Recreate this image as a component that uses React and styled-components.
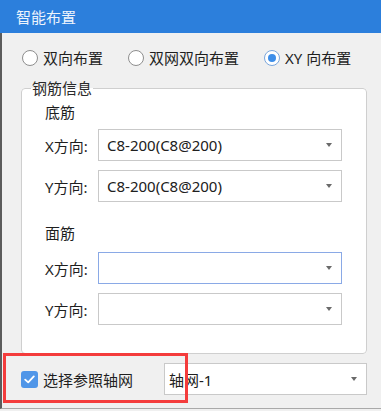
import React from "react";
import styled, { createGlobalStyle } from "styled-components";

const GlobalStyle = createGlobalStyle`
  html, body { margin: 0; padding: 0; background: #f0f0f0; }
  body {
    font-family: "Noto Sans", "Noto Sans CJK SC", sans-serif;
    font-size: 15px;
    color: #1f1f1f;
  }
  * { box-sizing: border-box; }
`;

const Window = styled.div`
  width: 381px;
  height: 411px;
  display: flex;
  flex-direction: column;
  overflow: hidden;
  padding-bottom: 2px;
  background: #f0f0f0;
`;

const TitleBar = styled.div`
  height: 33px;
  flex: none;
  background: #2c7fdc;
  color: #eef4fc;
  display: flex;
  align-items: center;
  padding-left: 16px;
  font-size: 15px;
`;

const Content = styled.div`
  flex: 1;
  display: flex;
  flex-direction: column;
  border-left: 2px solid #5c5c5c;
  border-bottom: 1px solid #a9a9a9;
  padding: 0 14px 0 19px;
`;

const RadioRow = styled.div`
  display: flex;
  align-items: center;
  height: 24px;
  margin-top: 13px;
  padding-left: 1px;
  gap: 25px;
`;

const RadioItem = styled.label`
  display: flex;
  align-items: center;
  gap: 5px;
  line-height: 24px;
  white-space: nowrap;
`;

const RadioCircle = styled.span`
  width: 16px;
  height: 16px;
  border-radius: 50%;
  border: 1px solid ${(p) => (p.$checked ? "#7aa6dc" : "#8e8e8e")};
  background: #fff;
  display: flex;
  align-items: center;
  justify-content: center;
  &::after {
    content: "";
    width: 8px;
    height: 8px;
    border-radius: 50%;
    background: ${(p) => (p.$checked ? "#3d8ee9" : "transparent")};
  }
`;

const GroupBox = styled.fieldset`
  margin: 8px 0 0 0;
  padding: 0;
  border: 1px solid #cfcfcf;
  border-radius: 4px;
  background: #fff;
  min-width: 0;
`;

const Legend = styled.legend`
  margin-left: 9px;
  padding: 0 1px;
  line-height: 20px;
  color: #2a2a2a;
`;

const GroupInner = styled.div`
  padding: 3px 24px 28px 23px;
  display: flex;
  flex-direction: column;
`;

const SectionTitle = styled.div`
  line-height: 22px;
  height: 22px;
  margin-top: ${(p) => p.$top}px;
  margin-bottom: ${(p) => p.$bottom}px;
`;

const FieldRow = styled.div`
  display: flex;
  align-items: center;
  margin-top: ${(p) => p.$top || 0}px;
`;

const FieldLabel = styled.span`
  width: 53px;
  flex: none;
  white-space: nowrap;
`;

const SelectBox = styled.div`
  flex: ${(p) => (p.$width ? "none" : "1")};
  width: ${(p) => (p.$width ? `${p.$width}px` : "auto")};
  height: 32px;
  background: #fff;
  border: 1px solid ${(p) => (p.$focused ? "#8aa9e6" : "#c9c9c9")};
  display: flex;
  align-items: center;
  justify-content: space-between;
  padding: 0 9px 0 ${(p) => p.$padLeft || 8}px;
  color: #202020;
  white-space: nowrap;
`;

const Arrow = styled.span`
  width: 0;
  height: 0;
  border-left: 3.5px solid transparent;
  border-right: 3.5px solid transparent;
  border-top: 4px solid #6a6a6a;
`;

const BottomRow = styled.div`
  position: relative;
  display: flex;
  align-items: center;
  height: 32px;
  margin-top: 9px;
`;

const CheckLabel = styled.label`
  display: flex;
  align-items: center;
  gap: 5px;
  white-space: nowrap;
`;

const CheckBox = styled.span`
  width: 17px;
  height: 17px;
  border-radius: 3px;
  background: #5096e8;
  display: flex;
  align-items: center;
  justify-content: center;
`;

const Spacer = styled.div`
  flex: 1;
`;

const Highlight = styled.div`
  position: absolute;
  left: -18px;
  top: -10px;
  width: 185px;
  height: 50px;
  border: 3px solid #f43c3c;
  pointer-events: none;
`;

function Select({ value, focused, width, padLeft }) {
  return (
    <SelectBox $focused={focused} $width={width} $padLeft={padLeft}>
      <span>{value}</span>
      <Arrow />
    </SelectBox>
  );
}

function Radio({ label, checked }) {
  return (
    <RadioItem>
      <RadioCircle $checked={checked} />
      {label}
    </RadioItem>
  );
}

export default function App() {
  return (
    <>
      <GlobalStyle />
      <Window>
        <TitleBar>智能布置</TitleBar>
        <Content>
          <RadioRow>
            <Radio label="双向布置" />
            <Radio label="双网双向布置" />
            <Radio label="XY 向布置" checked />
          </RadioRow>
          <GroupBox>
            <Legend>钢筋信息</Legend>
            <GroupInner>
              <SectionTitle $top={0} $bottom={6}>底筋</SectionTitle>
              <FieldRow>
                <FieldLabel>X方向:</FieldLabel>
                <Select value="C8-200(C8@200)" />
              </FieldRow>
              <FieldRow $top={9}>
                <FieldLabel>Y方向:</FieldLabel>
                <Select value="C8-200(C8@200)" />
              </FieldRow>
              <SectionTitle $top={20} $bottom={8}>面筋</SectionTitle>
              <FieldRow>
                <FieldLabel>X方向:</FieldLabel>
                <Select value="" focused />
              </FieldRow>
              <FieldRow $top={9}>
                <FieldLabel>Y方向:</FieldLabel>
                <Select value="" />
              </FieldRow>
            </GroupInner>
          </GroupBox>
          <BottomRow>
            <CheckLabel>
              <CheckBox>
                <svg width="11" height="9" viewBox="0 0 11 9">
                  <path d="M1.2 4.6 L4.2 7.4 L9.8 1.4" fill="none" stroke="#fff" strokeWidth="1.8" strokeLinecap="round" strokeLinejoin="round" />
                </svg>
              </CheckBox>
              选择参照轴网
            </CheckLabel>
            <Spacer />
            <Select value="轴网-1" width={203} padLeft={4} />
            <Highlight />
          </BottomRow>
        </Content>
      </Window>
    </>
  );
}
